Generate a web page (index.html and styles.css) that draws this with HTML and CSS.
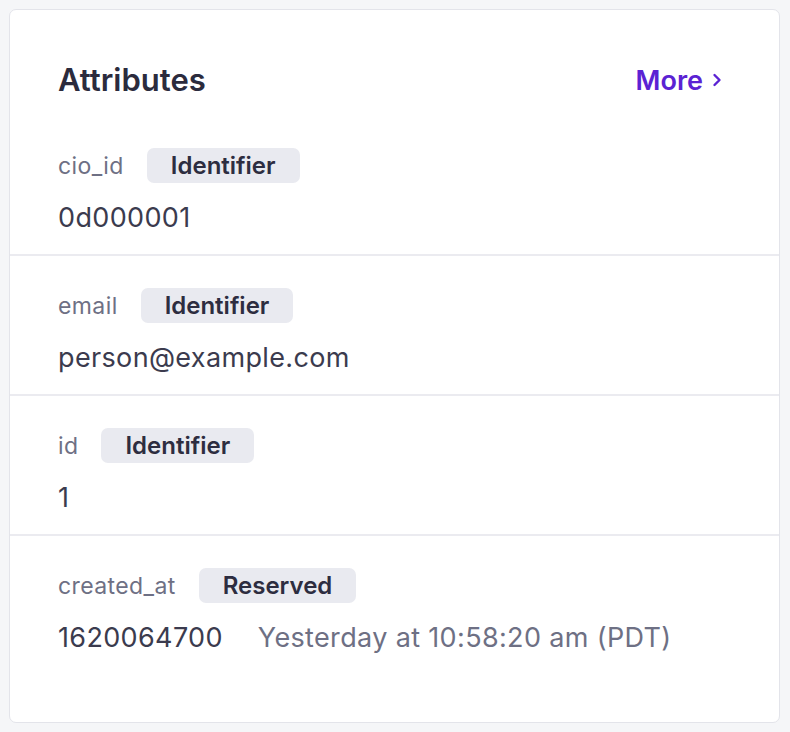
FILE: index.html
```html
<!DOCTYPE html>
<html lang="en">
<head>
    <meta charset="UTF-8">
    <meta name="viewport" content="width=device-width, initial-scale=1.0">
    <title>Attributes</title>
    <link rel="stylesheet" href="styles.css">
</head>

<body>
    <div class="card">
        <div class="card-head">
            <h2 class="title">Attributes</h2>
            <a class="more" href="#">More
                <svg class="chev" width="12" height="14" viewBox="0 0 12 14">
                    <path d="M3.5 2 L8.5 7 L3.5 12" fill="none" stroke="currentColor" stroke-width="2.4"
                        stroke-linecap="round" stroke-linejoin="round" />
                </svg>
            </a>
        </div>

        <div class="attr">
            <div class="attr-top">
                <span class="attr-name">cio_id</span>
                <span class="tag">Identifier</span>
            </div>
            <div class="attr-val">0d000001</div>
        </div>

        <div class="attr">
            <div class="attr-top">
                <span class="attr-name">email</span>
                <span class="tag">Identifier</span>
            </div>
            <div class="attr-val">person@example.com</div>
        </div>

        <div class="attr">
            <div class="attr-top">
                <span class="attr-name">id</span>
                <span class="tag">Identifier</span>
            </div>
            <div class="attr-val">1</div>
        </div>

        <div class="attr">
            <div class="attr-top">
                <span class="attr-name">created_at</span>
                <span class="tag">Reserved</span>
            </div>
            <div class="attr-val">1620064700 <span class="muted">Yesterday at 10:58:20 am (PDT)</span></div>
        </div>
    </div>
</body>

</html>
```

FILE: styles.css
```css
* {
    box-sizing: border-box;
}

body {
    margin: 0;
    background: #f5f6f8;
    font-family: Inter, "Noto Sans", sans-serif;
    padding: 9px 10px 9px 9px;
}

.card {
    background: #fff;
    border: 1px solid #e3e4ea;
    border-radius: 7px;
    padding: 50px 0 48px;
    height: 714px;
}

.card-head {
    display: flex;
    justify-content: space-between;
    align-items: center;
    padding: 0 56px 0 48px;
    margin-bottom: 16px;
}

.title {
    margin: 0;
    font-size: 31px;
    line-height: 40px;
    font-weight: 600;
    color: #2b2b3d;
}

.more {
    display: flex;
    align-items: center;
    gap: 8px;
    color: #5b22d3;
    text-decoration: none;
    font-size: 27px;
    font-weight: 600;
}

.attr {
    padding: 32px 48px 18px;
}

.attr + .attr {
    border-top: 2px solid #ebebf0;
}

.attr-top {
    display: flex;
    align-items: center;
    gap: 23px;
}

.attr-name {
    font-size: 23px;
    letter-spacing: 0.4px;
    color: #6e7084;
}

.tag {
    background: #e9eaf0;
    color: #2d2d40;
    font-size: 24px;
    font-weight: 600;
    line-height: 35px;
    padding: 0 24px;
    border-radius: 7px;
}

.attr-val {
    margin-top: 17px;
    font-size: 27px;
    line-height: 36px;
    letter-spacing: 0.35px;
    color: #3b3b4e;
}

.muted {
    color: #6e7084;
    margin-left: 27px;
}
```
